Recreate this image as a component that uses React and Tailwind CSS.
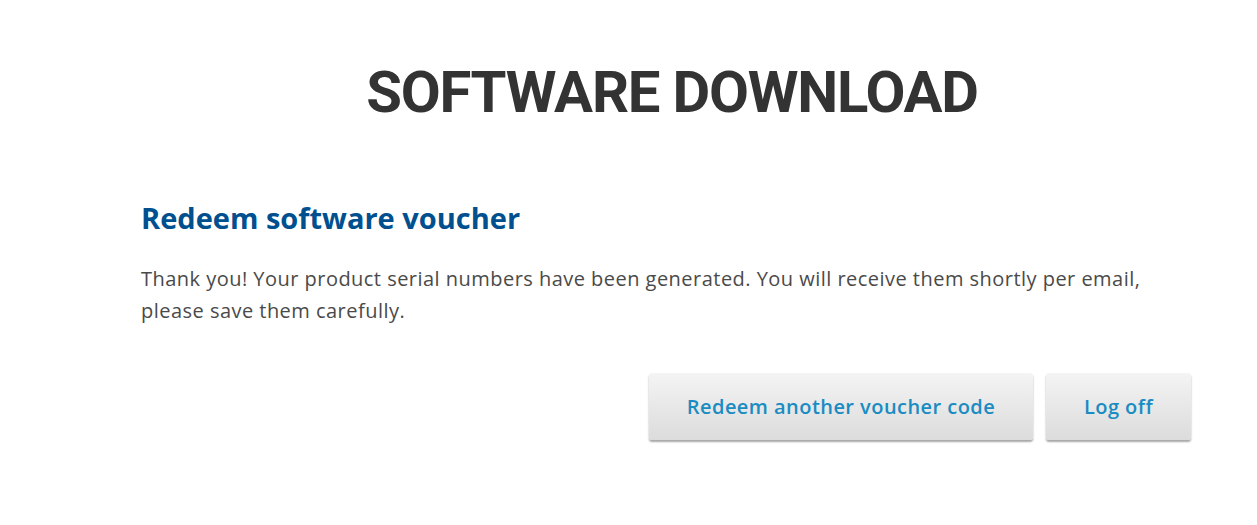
import React from 'react';

// Grey gradient button with blue label
function VoucherButton({ className = '', children }) {
  return (
    <button
      className={`h-[67px] rounded-[3px] bg-gradient-to-b from-[#f4f4f4] to-[#dcdcdc] shadow-[0_2px_2px_rgba(0,0,0,0.35)] text-[20px] font-semibold tracking-[0.45px] text-[#1a8cc2] ${className}`}
    >
      {children}
    </button>
  );
}

export default function App() {
  return (
    <div className="min-h-screen bg-white font-['Open_Sans','Liberation_Sans',sans-serif]">
      <div className="w-[1050px] ml-[141px] pt-[62px]">
        <h1 className="text-center text-[58px] leading-[60px] font-bold tracking-[-1.2px] text-[#333333] font-['Roboto','Liberation_Sans',sans-serif] pl-[12px]">
          SOFTWARE DOWNLOAD
        </h1>

        <h2 className="mt-[78px] text-[29px] leading-[36px] font-bold text-[#00508f]">
          Redeem software voucher
        </h2>

        <p className="mt-[27px] text-[20px] leading-[32px] tracking-[0.47px] text-[#4a4a4a] pr-[40px]">
          Thank you! Your product serial numbers have been generated. You will receive them shortly per email,
          please save them carefully.
        </p>

        <div className="mt-[46px] flex justify-end gap-[13px]">
          <VoucherButton className="w-[384px]">Redeem another voucher code</VoucherButton>
          <VoucherButton className="w-[145px]">Log off</VoucherButton>
        </div>
      </div>
    </div>
  );
}
